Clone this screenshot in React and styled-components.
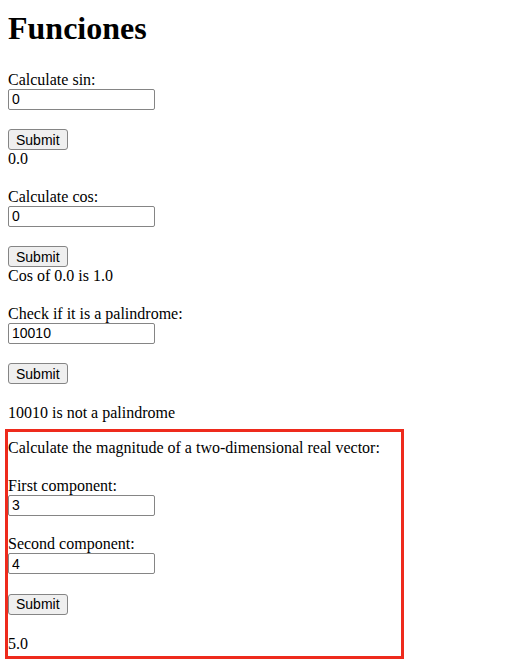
import React from 'react'
import styled, { createGlobalStyle } from 'styled-components'

const GlobalStyle = createGlobalStyle`
  html, body {
    min-height: 100%;
  }
  body {
    margin: 0;
    background: #fff;
    color: #000;
    font-family: "Liberation Serif", "Times New Roman", serif;
    font-size: 16px;
  }
`

const GAP = '19.5px'

const Page = styled.div`
  min-height: 670px;
  box-sizing: border-box;
  padding: 10px 8px 14px;
  display: flex;
  flex-direction: column;
  align-items: flex-start;
`

const Title = styled.h1`
  margin: 0 0 23.5px;
  font-size: 32px;
  line-height: 37px;
  font-weight: bold;
`

const Form = styled.form`
  display: flex;
  flex-direction: column;
  align-items: flex-start;
  margin: 0 0 ${GAP};
`

const Label = styled.label`
  display: block;
  line-height: 18px;
  white-space: nowrap;
`

const Field = styled.input`
  box-sizing: border-box;
  width: 147px;
  height: 21px;
  margin: 0;
  padding: 0 3px;
  border: 1px solid #858585;
  border-radius: 2px;
  background: #fff;
  font-family: "Liberation Sans", Arial, sans-serif;
  font-size: 14px;
  color: #000;
  margin-bottom: ${p => (p.$last ? '0' : GAP)};
`

const Button = styled.button`
  box-sizing: border-box;
  height: 21px;
  margin: ${GAP} 0 0;
  padding: 0 7px;
  border: 1px solid #858585;
  border-radius: 3px;
  background: #efefef;
  font-family: "Liberation Sans", Arial, sans-serif;
  font-size: 14px;
  color: #000;
`

const Result = styled.div`
  line-height: 18px;
  margin-top: ${p => (p.$spaced ? '20px' : '0')};
`

const Highlight = styled.div`
  box-sizing: border-box;
  width: 393px;
  margin-top: -10px;
  padding: 7.5px 0 3.5px;
  outline: 3px solid #ee2a1c;
  display: flex;
  flex-direction: column;
  align-items: flex-start;
`

const Intro = styled.p`
  margin: 0 0 ${GAP};
  line-height: 18px;
`

const Block = styled.form`
  display: flex;
  flex-direction: column;
  align-items: flex-start;
`

function Calculator({ label, value, result, spaced }) {
  return (
    <Form onSubmit={e => e.preventDefault()}>
      <Label>{label}</Label>
      <Field type="text" defaultValue={value} $last />
      <Button type="submit">Submit</Button>
      <Result $spaced={spaced}>{result}</Result>
    </Form>
  )
}

export default function App() {
  return (
    <>
      <GlobalStyle />
      <Page>
        <Title>Funciones</Title>
        <Calculator label="Calculate sin:" value="0" result="0.0" />
        <Calculator label="Calculate cos:" value="0" result="Cos of 0.0 is 1.0" />
        <Calculator
          label="Check if it is a palindrome:"
          value="10010"
          result="10010 is not a palindrome"
          spaced
        />
        <Highlight>
          <Intro>Calculate the magnitude of a two-dimensional real vector:</Intro>
          <Block onSubmit={e => e.preventDefault()}>
            <Label>First component:</Label>
            <Field type="text" defaultValue="3" />
            <Label>Second component:</Label>
            <Field type="text" defaultValue="4" $last />
            <Button type="submit">Submit</Button>
          </Block>
          <Result $spaced>5.0</Result>
        </Highlight>
      </Page>
    </>
  )
}
